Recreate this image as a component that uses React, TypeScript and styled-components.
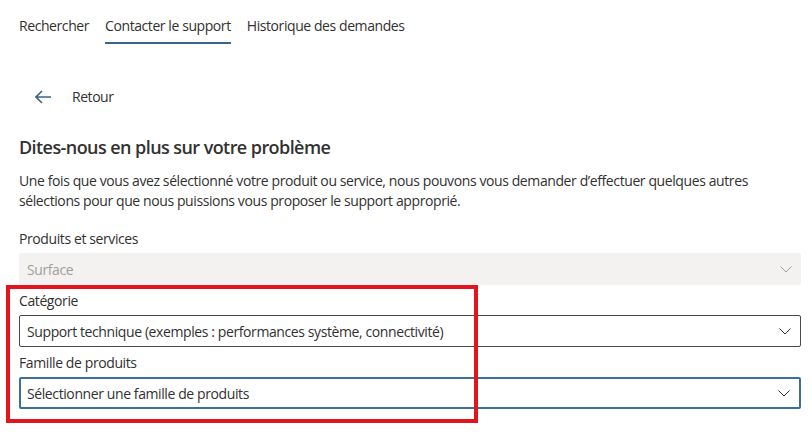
import React from "react";
import styled, { createGlobalStyle } from "styled-components";

const Global = createGlobalStyle`
  html, body { margin: 0; padding: 0; background: #ffffff; }
  body {
    font-family: "Segoe UI", "Open Sans", "Noto Sans", sans-serif;
    color: #323130;
    font-size: 14px;
  }
  * { box-sizing: border-box; }
`;

const Page = styled.div`
  position: relative;
  width: 812px;
  height: 447px;
  overflow: hidden;
  padding: 0 11px 0 19px;
`;

const Tabs = styled.nav`
  display: flex;
  gap: 16px;
  padding-top: 16px;
`;

const Tab = styled.a<{ $active?: boolean }>`
  display: block;
  font-size: 14px;
  line-height: 20px;
  padding-bottom: 6px;
  color: #323130;
  text-decoration: none;
  border-bottom: 2px solid ${(p) => (p.$active ? "#3e6684" : "transparent")};
  letter-spacing: -0.42px;
`;

const BackButton = styled.button`
  display: flex;
  align-items: center;
  gap: 21px;
  margin-top: 43px;
  padding: 0 0 0 16px;
  border: none;
  background: none;
  font: inherit;
  font-size: 14px;
  line-height: 20px;
  color: #323130;
  letter-spacing: -0.45px;
`;

const Heading = styled.h2`
  margin: 28px 0 0 0;
  font-size: 18px;
  line-height: 24px;
  font-weight: 600;
  color: #323130;
  letter-spacing: -0.57px;
`;

const Lead = styled.p`
  margin: 12px 0 12px 0;
  font-size: 14px;
  line-height: 20px;
  letter-spacing: -0.4px;
`;

const Field = styled.div`
  display: flex;
  flex-direction: column;
  gap: 4px;
  padding-top: 6px;
`;

const Label = styled.label`
  font-size: 14px;
  line-height: 20px;
  letter-spacing: -0.4px;
`;

const Select = styled.div<{ $state: "disabled" | "normal" | "focus" }>`
  display: flex;
  align-items: center;
  justify-content: space-between;
  height: 32px;
  border-radius: 2px;
  padding: 0 9px 0 ${(p) => (p.$state === "focus" ? "6px" : p.$state === "normal" ? "7px" : "8px")};
  font-size: 14px;
  letter-spacing: -0.4px;
  background: ${(p) => (p.$state === "disabled" ? "#f3f2f1" : "#ffffff")};
  color: ${(p) => (p.$state === "disabled" ? "#a19f9d" : "#323130")};
  border: ${(p) =>
    p.$state === "disabled"
      ? "none"
      : p.$state === "focus"
      ? "2px solid #3d6f9b"
      : "1px solid #4a4846"};
`;

const Highlight = styled.div`
  position: absolute;
  left: 6px;
  top: 285px;
  width: 472px;
  height: 138px;
  border: 4px solid #e3151c;
  pointer-events: none;
`;

const Chevron = ({ color }: { color: string }) => (
  <svg width="12" height="7" viewBox="0 0 12 7" fill="none">
    <path d="M0.5 0.5 L6 6 L11.5 0.5" stroke={color} strokeWidth="1" />
  </svg>
);

const ArrowLeft = () => (
  <svg width="16" height="14" viewBox="0 0 16 14" fill="none">
    <path d="M7 1 L1 7 L7 13 M1 7 H16" stroke="#3b6586" strokeWidth="1.6" strokeLinejoin="miter" />
  </svg>
);

export default function App() {
  return (
    <>
      <Global />
      <Page>
        <Tabs>
          <Tab>Rechercher</Tab>
          <Tab $active>Contacter le support</Tab>
          <Tab>Historique des demandes</Tab>
        </Tabs>
        <BackButton>
          <ArrowLeft />
          <span>Retour</span>
        </BackButton>
        <Heading>Dites-nous en plus sur votre problème</Heading>
        <Lead>
          Une fois que vous avez sélectionné votre produit ou service, nous pouvons vous demander d’effectuer quelques autres
          <br />
          sélections pour que nous puissions vous proposer le support approprié.
        </Lead>
        <Field>
          <Label>Produits et services</Label>
          <Select $state="disabled">
            <span>Surface</span>
            <Chevron color="#a19f9d" />
          </Select>
        </Field>
        <Field>
          <Label>Catégorie</Label>
          <Select $state="normal">
            <span>Support technique (exemples : performances système, connectivité)</span>
            <Chevron color="#323130" />
          </Select>
        </Field>
        <Field>
          <Label>Famille de produits</Label>
          <Select $state="focus">
            <span>Sélectionner une famille de produits</span>
            <Chevron color="#323130" />
          </Select>
        </Field>
        <Highlight />
      </Page>
    </>
  );
}
